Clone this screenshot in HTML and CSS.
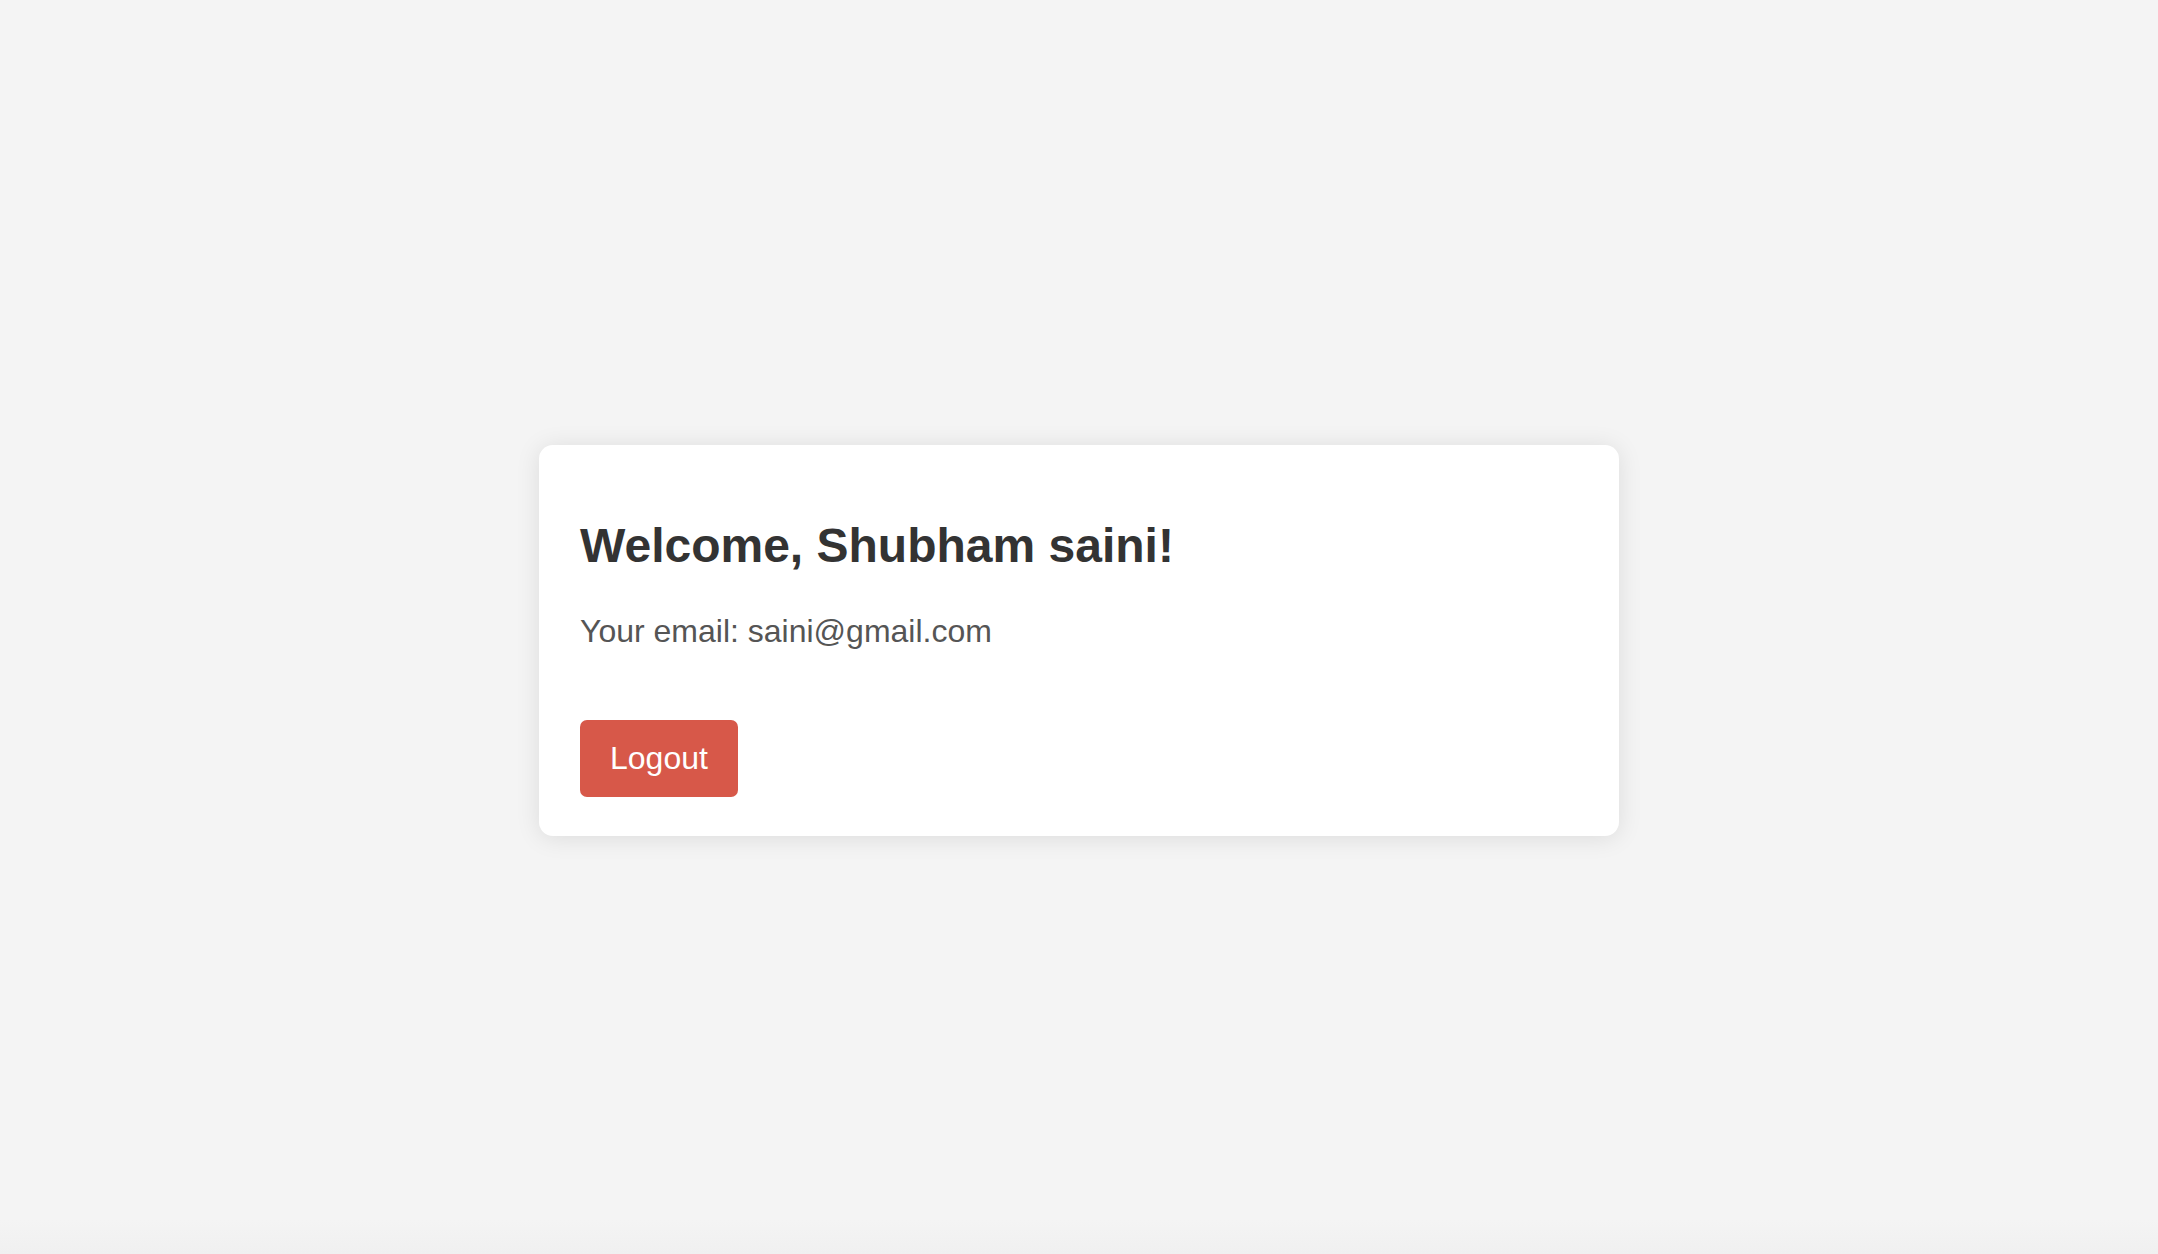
FILE: index.html
```html
<!DOCTYPE html>
<html lang="en">
<head>
<meta charset="utf-8">
<title>Dashboard</title>
<link rel="stylesheet" href="styles.css">
</head>
<body>
  <main class="page">
    <section class="card">
      <h1 class="title">Welcome, Shubham saini!</h1>
      <p class="email">Your email: saini@gmail.com</p>
      <div class="actions">
        <button class="logout" type="button">Logout</button>
      </div>
    </section>
  </main>
</body>
</html>
```
FILE: styles.css
```css
html, body {
  margin: 0;
  padding: 0;
}

body {
  font-family: "Liberation Sans", Arial, sans-serif;
  background: linear-gradient(to bottom, #f4f4f4 0, #f4f4f4 calc(100% - 34px), #f0f0f0 100%);
  color: #333;
}

.page {
  box-sizing: border-box;
  min-height: 100vh;
  padding-top: 27px;
  display: flex;
  justify-content: center;
  align-items: center;
}

.card {
  box-sizing: border-box;
  width: 1080px;
  background: #fff;
  border-radius: 14px;
  box-shadow: 0 2px 24px rgba(0, 0, 0, 0.1);
  padding: 40px 41px 39px;
}

.title {
  margin: 33px 0 40px;
  font-size: 48px;
  font-weight: bold;
  color: #333;
}

.email {
  margin: 0 0 70px;
  font-size: 32px;
  color: #555;
}

.actions {
  display: flex;
}

.logout {
  font-family: "Liberation Sans", Arial, sans-serif;
  font-size: 32px;
  color: #fff;
  background: #d75849;
  border: none;
  border-radius: 7px;
  padding: 20px 30px;
  line-height: normal;
  cursor: pointer;
}
```
